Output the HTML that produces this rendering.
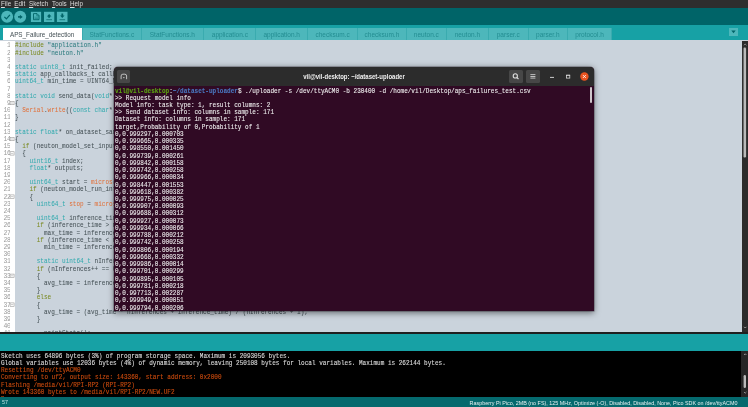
<!DOCTYPE html>
<html><head><meta charset="utf-8">
<style>
*{margin:0;padding:0;box-sizing:border-box}
body{filter:opacity(1);will-change:transform}
html,body{width:748px;height:407px;overflow:hidden;background:#cad3dc;font-family:"Liberation Sans",sans-serif}
.abs{position:absolute}
#menubar{left:0;top:0;width:748px;height:8px;background:#2e2e2e;color:#dcdcdc;font-size:6.3px;line-height:8px}
#menubar span{position:absolute;top:-0.5px}
#menubar u{text-decoration-thickness:0.6px;text-underline-offset:0.6px}
#toolbar{left:0;top:8px;width:748px;height:16.6px;background:#006468}
.circ{position:absolute;top:2.8px;width:12px;height:12px;border-radius:50%;background:#4db7bb}
.sq{position:absolute;top:3.8px;width:10.5px;height:10.2px;background:#4db7bb}
#tabrow{left:0;top:24.6px;width:748px;height:15.9px;background:#17a1a5}
.tab{position:absolute;top:3.4px;height:12.5px;background:#4db7bb;color:#238d91;font-size:6.5px;line-height:14.6px;text-align:center;white-space:nowrap}
.tab.sel{background:#fff;color:#434f54;font-size:6.3px;line-height:14.6px}
#gutter{left:0;top:40.5px;width:15px;height:291.5px;background:#ffffff}
#code{left:15px;top:40.5px;width:727px;height:291.5px;background:#cad3dc}
.mono{font-family:"Liberation Mono",monospace}
#ln{left:0;top:42.3px;height:289.7px;overflow:hidden;width:10.3px;text-align:right;color:#9a9a9a;font-size:6.4px;line-height:7.2px;white-space:pre;letter-spacing:-0.45px}
#src{left:15.2px;top:42.3px;height:289.7px;width:800px;overflow:hidden;color:#434f54;font-size:6.5px;line-height:7.2px;white-space:pre;transform:scaleX(0.927);transform-origin:0 0;-webkit-text-stroke:0.04px currentColor}
.k{color:#33aaae}.p{color:#7a8a22}.o{color:#e0703a}.s{color:#2a7a7d}
#vscroll{left:742px;top:40.5px;width:6px;height:291.5px;background:#2b2b2b}
#divider{left:0;top:332px;width:748px;height:2px;background:#1f1f1f}
#notice{left:0;top:334px;width:748px;height:17px;background:#17a1a5}
#console{left:0;top:351px;width:748px;height:45.7px;background:#000;overflow:hidden}
#contxt{left:1.2px;top:1.7px;color:#d8d8d8;font-size:6.5px;line-height:7.2px;white-space:pre;transform:scaleX(0.927);transform-origin:0 0;-webkit-text-stroke:0.12px currentColor}
.err{color:#c84a0e}
#cscroll{left:741px;top:351px;width:7px;height:45.7px;background:#262626}
#status{left:0;top:396.7px;width:748px;height:10.3px;background:#056a6e;color:#e6f0f0;font-size:5.4px;line-height:12.2px}
/* terminal */
#term{left:114px;top:67px;width:479.7px;height:243.5px;background:#300a24;border-radius:4px 4px 0 0;box-shadow:0 1.5px 6px rgba(0,0,0,.5),0 0 0 0.5px rgba(40,30,40,.5);overflow:hidden}
#ttitle{left:0;top:0;width:100%;height:19.4px;background:#2c2c2c;border-radius:4px 4px 0 0}
#ttxt{left:1px;top:20.5px;color:#f2f2f2;font-size:6.8px;line-height:7.23px;white-space:pre;transform:scaleX(0.886);transform-origin:0 0;-webkit-text-stroke:0.08px currentColor}
.g{color:#5ea512;font-weight:bold}.b{color:#4a78c0;font-weight:bold}
.tbtn{position:absolute;width:13.6px;height:12.8px;background:#474747;border-radius:1.5px}
</style></head><body>
<div id="menubar" class="abs"><span style="left:1px"><u>F</u>ile</span><span style="left:14.3px"><u>E</u>dit</span><span style="left:29px"><u>S</u>ketch</span><span style="left:52px"><u>T</u>ools</span><span style="left:70px"><u>H</u>elp</span></div>
<div id="toolbar" class="abs">
 <svg class="abs" style="left:0;top:0" width="80" height="17">
  <circle cx="7.1" cy="8.8" r="6" fill="#4db7bb"/>
  <path d="M4.4 8.9 L6.4 10.9 L9.9 6.9" stroke="#006468" stroke-width="1.3" fill="none"/>
  <circle cx="20.2" cy="8.8" r="6" fill="#4db7bb"/>
  <path d="M18 8.9 H20.6" stroke="#006468" stroke-width="1.6"/><path d="M19.9 6.8 L22.7 8.9 L19.9 11Z" fill="#006468"/>
  <rect x="30.9" y="3.8" width="10.2" height="10.2" fill="#4db7bb"/>
  <path d="M33.5 5.6 H37 L39 7.6 V11.7 H33.5Z" fill="none" stroke="#006468" stroke-width="0.9"/>
  <path d="M36.8 5.6 V7.8 H39" fill="none" stroke="#006468" stroke-width="0.6"/>
  <path d="M34.4 9.2 H38.1 M34.4 10.5 H38.1" stroke="#006468" stroke-width="0.45"/>
  <rect x="44" y="3.8" width="10.3" height="10.2" fill="#4db7bb"/>
  <path d="M49.15 5.9 L51.5 8.4 H50.1 V9.8 H48.2 V8.4 H46.8Z" fill="#006468"/>
  <path d="M46.3 11.7 H52" stroke="#006468" stroke-width="0.7"/>
  <rect x="56.9" y="3.8" width="10.6" height="10.2" fill="#4db7bb"/>
  <path d="M62.3 9.9 L64.6 7.4 H63.2 V5.4 H61.4 V7.4 H60Z" fill="#006468"/>
  <path d="M59.5 11.7 H65.1" stroke="#006468" stroke-width="0.7"/>
 </svg>
</div>
<div id="tabrow" class="abs">
 <div class="abs" style="left:81.8px;top:3.4px;width:530px;height:12.5px;background:#3aabaf"></div>
 <div class="tab sel" style="left:2.5px;width:79.3px">APS_Failure_detection</div>
 <div class="tab" style="left:82.6px;width:58.4px">StatFunctions.c</div>
 <div class="tab" style="left:141.7px;width:61.3px">StatFunctions.h</div>
 <div class="tab" style="left:204.2px;width:51.3px">application.c</div>
 <div class="tab" style="left:256.2px;width:51.0px">application.h</div>
 <div class="tab" style="left:308.0px;width:49.3px">checksum.c</div>
 <div class="tab" style="left:358.0px;width:47.9px">checksum.h</div>
 <div class="tab" style="left:406.7px;width:39.3px">neuton.c</div>
 <div class="tab" style="left:446.8px;width:41.2px">neuton.h</div>
 <div class="tab" style="left:488.8px;width:39.0px">parser.c</div>
 <div class="tab" style="left:528.6px;width:38.4px">parser.h</div>
 <div class="tab" style="left:567.8px;width:43.5px">protocol.h</div>
 <div class="abs" style="left:729px;top:3.7px;width:9px;height:7.7px;background:#4db7bb"><svg class="abs" style="left:0;top:0" width="9" height="7.7"><path d="M2.3 2.6 L6.7 2.6 L4.5 5.2Z" fill="#006468"/></svg></div>
</div>
<div id="gutter" class="abs"></div>
<div id="code" class="abs"></div>
<svg class="abs" style="left:0;top:0" width="16" height="407"><rect x="10.1" y="101.30" width="4" height="3.4" fill="none" stroke="#9a9a9a" stroke-width="0.6"/><path d="M10.9 103.00 H13.3" stroke="#9a9a9a" stroke-width="0.5"/><rect x="10.1" y="137.30" width="4" height="3.4" fill="none" stroke="#9a9a9a" stroke-width="0.6"/><path d="M10.9 139.00 H13.3" stroke="#9a9a9a" stroke-width="0.5"/><rect x="10.1" y="151.70" width="4" height="3.4" fill="none" stroke="#9a9a9a" stroke-width="0.6"/><path d="M10.9 153.40 H13.3" stroke="#9a9a9a" stroke-width="0.5"/><rect x="10.1" y="194.90" width="4" height="3.4" fill="none" stroke="#9a9a9a" stroke-width="0.6"/><path d="M10.9 196.60 H13.3" stroke="#9a9a9a" stroke-width="0.5"/><rect x="10.1" y="274.10" width="4" height="3.4" fill="none" stroke="#9a9a9a" stroke-width="0.6"/><path d="M10.9 275.80 H13.3" stroke="#9a9a9a" stroke-width="0.5"/><rect x="10.1" y="302.90" width="4" height="3.4" fill="none" stroke="#9a9a9a" stroke-width="0.6"/><path d="M10.9 304.60 H13.3" stroke="#9a9a9a" stroke-width="0.5"/></svg>
<div id="ln" class="abs mono">1
2
3
4
5
6
7
8
9
10
11
12
13
14
15
16
17
18
19
20
21
22
23
24
25
26
27
28
29
30
31
32
33
34
35
36
37
38
39
40
41</div>
<div id="src" class="abs mono"><span class="p">#include</span> <span class="s">"application.h"</span>
<span class="p">#include</span> <span class="s">"neuton.h"</span>

<span class="k">static</span> <span class="k">uint8_t</span> init_failed;
<span class="k">static</span> app_callbacks_t callbacks;
<span class="k">uint64_t</span> min_time = UINT64_MAX;

<span class="k">static</span> <span class="k">void</span> send_data(<span class="k">void</span>* data, <span class="k">size_t</span> size)
{
  <span class="o">Serial</span>.<span class="o">write</span>((<span class="k">const</span> <span class="k">char</span>*)data, size);
}

<span class="k">static</span> <span class="k">float</span>* on_dataset_sample(<span class="k">float</span>* inputs)
{
  <span class="p">if</span> (neuton_model_set_inputs(inputs) == 0)
  {
    <span class="k">uint16_t</span> index;
    <span class="k">float</span>* outputs;

    <span class="k">uint64_t</span> start = <span class="o">micros</span>();
    <span class="p">if</span> (neuton_model_run_inference(&amp;index, &amp;outputs) == 0)
    {
      <span class="k">uint64_t</span> <span class="o">stop</span> = <span class="o">micros</span>();

      <span class="k">uint64_t</span> inference_time = <span class="o">stop</span> - start;
      <span class="p">if</span> (inference_time &gt; max_time)
        max_time = inference_time;
      <span class="p">if</span> (inference_time &lt; min_time)
        min_time = inference_time;

      <span class="k">static</span> <span class="k">uint64_t</span> nInferences = 0;
      <span class="p">if</span> (nInferences++ == 0)
      {
        avg_time = inference_time;
      }
      <span class="p">else</span>
      {
        avg_time = (avg_time * nInferences + inference_time) / (nInferences + 1);
      }

        printStats();</div>
<div id="vscroll" class="abs"><svg class="abs" style="left:0;top:0" width="6" height="290"><path d="M2 4.2 L3.2 3 L4.4 4.2" stroke="#bdbdbd" stroke-width="0.7" fill="none"/><rect x="0.6" y="6" width="4.4" height="111" rx="2" fill="#3a3a3a"/><rect x="1.6" y="6.5" width="2.4" height="110" rx="1.2" fill="#b9b9b9"/><path d="M2 285.8 L3.2 287 L4.4 285.8" stroke="#bdbdbd" stroke-width="0.7" fill="none"/></svg></div>
<div id="divider" class="abs"></div>
<div id="notice" class="abs"></div>
<div id="console" class="abs"><div id="contxt" class="abs mono">Sketch uses 64896 bytes (3%) of program storage space. Maximum is 2093056 bytes.
Global variables use 12036 bytes (4%) of dynamic memory, leaving 250108 bytes for local variables. Maximum is 262144 bytes.
<span class="err">Resetting /dev/ttyACM0
Converting to uf2, output size: 143360, start address: 0x2000
Flashing /media/vil/RPI-RP2 (RPI-RP2)
Wrote 143360 bytes to /media/vil/RPI-RP2/NEW.UF2
Done.</span></div></div>
<div id="cscroll" class="abs"><svg class="abs" style="left:1px;top:0" width="6" height="45"><path d="M2 4 L3.2 2.8 L4.4 4" stroke="#bdbdbd" stroke-width="0.7" fill="none"/><rect x="1.6" y="24" width="2.4" height="13" rx="1.2" fill="#b9b9b9"/><path d="M2 41 L3.2 42.2 L4.4 41" stroke="#bdbdbd" stroke-width="0.7" fill="none"/></svg></div>
<div id="status" class="abs"><span class="abs" style="left:2px;top:-0.9px;color:#b8e0e0">57</span><span class="abs" style="left:469.6px;top:0">Raspberry Pi Pico, 2MB (no FS), 125 MHz, Optimize (-O), Disabled, Disabled, None, Pico SDK on /dev/ttyACM0</span></div>

<div id="term" class="abs">
 <div id="ttitle" class="abs">
  <div class="tbtn" style="left:2.8px;top:2.8px"></div>
  <svg class="abs" style="left:0;top:0" width="480" height="19">
   <path d="M7.1 12.2 V9 Q7.1 7.2 8.9 7.2 H10.8 Q12.6 7.2 12.6 9 V12.2" fill="none" stroke="#cfcfcf" stroke-width="0.9"/>
   <circle cx="9.85" cy="10.6" r="0.7" fill="#cfcfcf"/>
  </svg>
  <div class="abs" style="left:-0.5px;top:0;width:480px;text-align:center;color:#f0f0f0;font-weight:bold;font-size:6.4px;line-height:19px;transform:scaleX(0.94);transform-origin:50% 0">vil@vil-desktop: ~/dataset-uploader</div>
  <div class="tbtn" style="left:395.2px;top:2.9px"></div>
  <div class="tbtn" style="left:412.3px;top:2.9px"></div>
  <svg class="abs" style="left:0;top:0" width="480" height="19">
   <circle cx="401.3" cy="8.9" r="2.1" fill="none" stroke="#dcdcdc" stroke-width="1.1"/>
   <path d="M402.8 10.4 L404.5 12.1" stroke="#dcdcdc" stroke-width="1.2"/>
   <path d="M416.4 7.6 H421.4 M416.4 9.5 H421.4 M416.4 11.1 H421.4" stroke="#cfcfcf" stroke-width="0.9"/>
   <path d="M436 10.4 H440" stroke="#e0e0e0" stroke-width="0.9"/>
   <rect x="452.5" y="8.3" width="3.3" height="2.8" fill="none" stroke="#e0e0e0" stroke-width="0.75"/><path d="M452.2 8.1 H456.1" stroke="#e0e0e0" stroke-width="0.6"/>
   <circle cx="470.4" cy="9.5" r="4.2" fill="#e95420"/>
   <path d="M468.9 8 L471.9 11 M471.9 8 L468.9 11" stroke="#fff" stroke-width="0.8"/>
  </svg>
 </div>
 <div class="abs" style="left:475.7px;top:20.1px;width:2.3px;height:16px;background:#cfc6cb;border-radius:1px"></div>
 <div id="ttxt" class="abs mono"><span class="g">vil@vil-desktop</span>:<span class="b">~/dataset-uploader</span>$ ./uploader -s /dev/ttyACM0 -b 230400 -d /home/vil/Desktop/aps_failures_test.csv
&gt;&gt; Request model info
Model info: task type: 1, result columns: 2
&gt;&gt; Send dataset info: columns in sample: 171
Dataset info: columns in sample: 171
target,Probability of 0,Probability of 1
0,0.999297,0.000703
0,0.999665,0.000335
0,0.998550,0.001450
0,0.999739,0.000261
0,0.999842,0.000158
0,0.999742,0.000258
0,0.999966,0.000034
0,0.998447,0.001553
0,0.999618,0.000382
0,0.999975,0.000025
0,0.999907,0.000093
0,0.999688,0.000312
0,0.999927,0.000073
0,0.999934,0.000066
0,0.999788,0.000212
0,0.999742,0.000258
0,0.999806,0.000194
0,0.999668,0.000332
0,0.999986,0.000014
0,0.999701,0.000299
0,0.999895,0.000105
0,0.999781,0.000218
0,0.997713,0.002287
0,0.999949,0.000051
0,0.999794,0.000206</div>
</div>
</body></html>
